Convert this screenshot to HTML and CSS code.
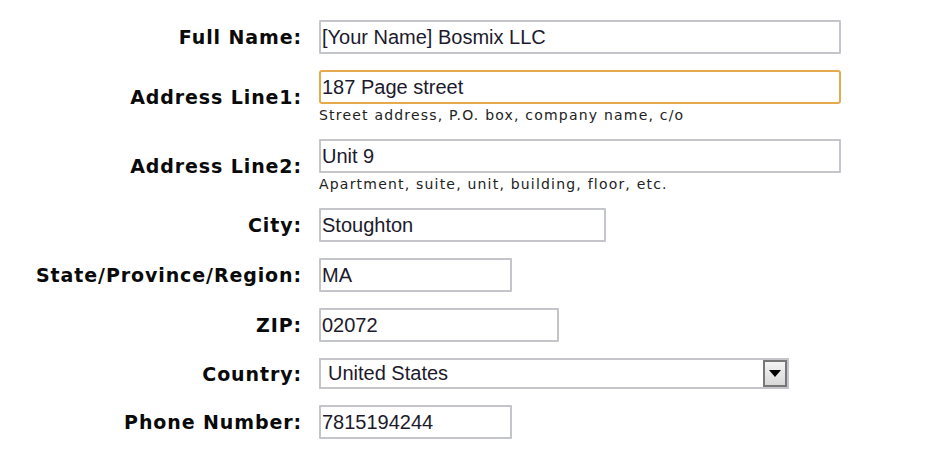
FILE: index.html
```html
<!DOCTYPE html>
<html lang="en">

<head>
    <meta charset="UTF-8">
    <meta name="viewport" content="width=device-width, initial-scale=1.0">
    <title>Shipping Address</title>
    <link rel="stylesheet" href="styles.css">
</head>

<body>
    <form id="addressForm" class="address-form">
        <label class="field-label" for="fullName">Full Name:</label>
        <div class="field">
            <input type="text" id="fullName" class="text-input wide" value="[Your Name] Bosmix LLC">
        </div>

        <label class="field-label" for="address1">Address Line1:</label>
        <div class="field">
            <input type="text" id="address1" class="text-input wide focused" value="187 Page street">
            <span class="hint">Street address, P.O. box, company name, c/o</span>
        </div>

        <label class="field-label" for="address2">Address Line2:</label>
        <div class="field">
            <input type="text" id="address2" class="text-input wide" value="Unit 9">
            <span class="hint">Apartment, suite, unit, building, floor, etc.</span>
        </div>

        <label class="field-label" for="city">City:</label>
        <div class="field">
            <input type="text" id="city" class="text-input city" value="Stoughton">
        </div>

        <label class="field-label" for="state">State/Province/Region:</label>
        <div class="field">
            <input type="text" id="state" class="text-input short" value="MA">
        </div>

        <label class="field-label" for="zip">ZIP:</label>
        <div class="field">
            <input type="text" id="zip" class="text-input zip" value="02072">
        </div>

        <label class="field-label" for="country">Country:</label>
        <div class="field">
            <div class="select-box">
                <span class="select-value">United States</span>
                <span class="select-button">
                    <svg width="12" height="7" viewBox="0 0 12 7"><path d="M0 0 L12 0 L6 7 Z" fill="#000"/></svg>
                </span>
            </div>
        </div>

        <label class="field-label" for="phone">Phone Number:</label>
        <div class="field">
            <input type="text" id="phone" class="text-input short" value="7815194244">
        </div>
    </form>
</body>

</html>
```

FILE: styles.css
```css
body {
    margin: 0;
    padding: 0;
    background-color: #fff;
}

.address-form {
    display: grid;
    grid-template-columns: 301px auto;
    column-gap: 18px;
    row-gap: 16px;
    align-items: center;
    justify-content: start;
    padding-top: 20px;
}

.field-label {
    font-family: "DejaVu Sans", Verdana, sans-serif;
    font-weight: bold;
    font-size: 19px;
    letter-spacing: 0.9px;
    color: #0a0a0a;
    text-align: right;
    margin-right: -1px;
}

.field {
    display: flex;
    flex-direction: column;
    align-items: flex-start;
}

.text-input {
    box-sizing: border-box;
    height: 34px;
    padding: 0 0 0 1px;
    border: 2px solid #c4c4cb;
    border-radius: 1px;
    font-family: "Liberation Sans", Arial, sans-serif;
    font-size: 20px;
    color: #1c1a2c;
    outline: none;
}

.text-input.focused {
    border-color: #e4aa4c;
    border-radius: 3px;
}

.wide {
    width: 522px;
}

.city {
    width: 287px;
}

.short {
    width: 193px;
}

.zip {
    width: 240px;
}

.hint {
    font-family: "DejaVu Sans", Verdana, sans-serif;
    font-size: 14px;
    letter-spacing: 1.2px;
    color: #222;
    margin-top: 3px;
    line-height: 16px;
}

.select-box {
    box-sizing: border-box;
    width: 470px;
    height: 31px;
    border: 2px solid #c4c4cb;
    display: flex;
    align-items: center;
    justify-content: space-between;
}

.select-value {
    font-family: "Liberation Sans", Arial, sans-serif;
    font-size: 20px;
    color: #1c1a2c;
    padding-left: 7px;
}

.select-button {
    box-sizing: border-box;
    width: 24px;
    height: 27px;
    border: 2px solid #777;
    background: linear-gradient(#f4f4f4, #d8d8d8);
    display: flex;
    align-items: center;
    justify-content: center;
}
```
